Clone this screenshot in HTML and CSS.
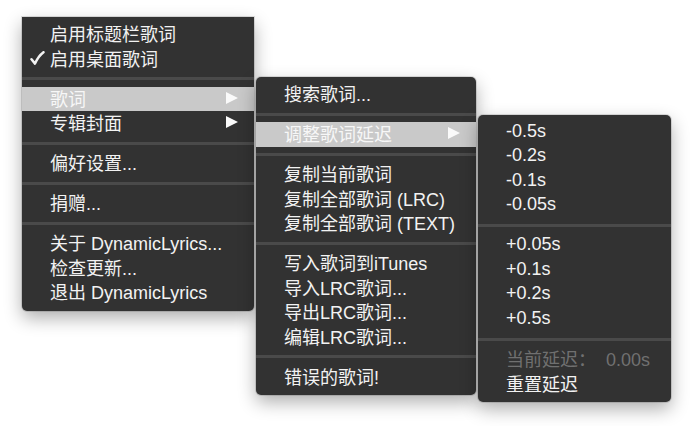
FILE: index.html
```html
<!DOCTYPE html>
<html lang="zh-CN">
<head>
    <meta charset="UTF-8">
    <title>DynamicLyrics Menu</title>
    <link rel="stylesheet" href="styles.css">
</head>
<body>

<div class="screen">
    <ul class="menu menu-main">
        <li class="item">启用标题栏歌词</li>
        <li class="item">
            <svg class="check" width="15" height="15" viewBox="0 0 15 15">
                <path d="M1.5 8.2 L5 12.6 C7 8 9.5 4.2 13.5 1.2" fill="none" stroke="#f2f2f2" stroke-width="2.5" stroke-linecap="round" stroke-linejoin="round"/>
            </svg>
            启用桌面歌词
        </li>
        <li class="sep"></li>
        <li class="item active">歌词<span class="arrow"></span></li>
        <li class="item">专辑封面<span class="arrow"></span></li>
        <li class="sep"></li>
        <li class="item">偏好设置...</li>
        <li class="sep"></li>
        <li class="item">捐赠...</li>
        <li class="sep"></li>
        <li class="item">关于 DynamicLyrics...</li>
        <li class="item">检查更新...</li>
        <li class="item">退出 DynamicLyrics</li>
    </ul>

    <ul class="menu menu-lyrics">
        <li class="item">搜索歌词...</li>
        <li class="sep"></li>
        <li class="item active">调整歌词延迟<span class="arrow"></span></li>
        <li class="sep"></li>
        <li class="item">复制当前歌词</li>
        <li class="item">复制全部歌词 (LRC)</li>
        <li class="item">复制全部歌词 (TEXT)</li>
        <li class="sep"></li>
        <li class="item">写入歌词到iTunes</li>
        <li class="item">导入LRC歌词...</li>
        <li class="item">导出LRC歌词...</li>
        <li class="item">编辑LRC歌词...</li>
        <li class="sep"></li>
        <li class="item">错误的歌词!</li>
    </ul>

    <ul class="menu menu-delay">
        <li class="item">-0.5s</li>
        <li class="item">-0.2s</li>
        <li class="item">-0.1s</li>
        <li class="item">-0.05s</li>
        <li class="sep"></li>
        <li class="item">+0.05s</li>
        <li class="item">+0.1s</li>
        <li class="item">+0.2s</li>
        <li class="item">+0.5s</li>
        <li class="sep"></li>
        <li class="item disabled">当前延迟：&nbsp;&nbsp;0.00s</li>
        <li class="item">重置延迟</li>
    </ul>
</div>

</body>
</html>
```

FILE: styles.css
```css
body {
    margin: 0;
    background-color: #fff;
    font-family: "Liberation Sans", "Noto Sans CJK SC", sans-serif;
}

.screen {
    position: relative;
    width: 690px;
    height: 426px;
    overflow: hidden;
}

.menu {
    position: absolute;
    margin: 0;
    padding: 5px 0 6px;
    list-style: none;
    background-color: #323232;
    border-radius: 5px;
    box-shadow: 0 0 0 1px rgba(0, 0, 0, 0.12), 0 7px 18px rgba(0, 0, 0, 0.32);
}

.menu-main {
    left: 22px;
    top: 17px;
    width: 232px;
    border-radius: 0 0 5px 5px;
}

.menu-lyrics {
    left: 256px;
    top: 77px;
    width: 220px;
}

.menu-delay {
    left: 478px;
    top: 115px;
    width: 193px;
}

.item {
    position: relative;
    display: flex;
    align-items: center;
    justify-content: space-between;
    box-sizing: border-box;
    height: 24.5px;
    padding: 0 16px 2px 28px;
    color: #f2f2f2;
    font-size: 18px;
    white-space: nowrap;
}

.item.active {
    background-color: #c9c9c9;
    color: #f7f7f7;
}

.item.disabled {
    color: #707070;
}

.check {
    position: absolute;
    left: 8px;
    top: 4px;
}

.arrow {
    width: 0;
    height: 0;
    border-left: 12px solid #fafafa;
    border-top: 6px solid transparent;
    border-bottom: 6px solid transparent;
}

.sep {
    display: flex;
    align-items: center;
    height: 15.5px;
}

.sep::before {
    content: "";
    flex: 1;
    height: 3px;
    background-color: #4a4a4a;
}
```
